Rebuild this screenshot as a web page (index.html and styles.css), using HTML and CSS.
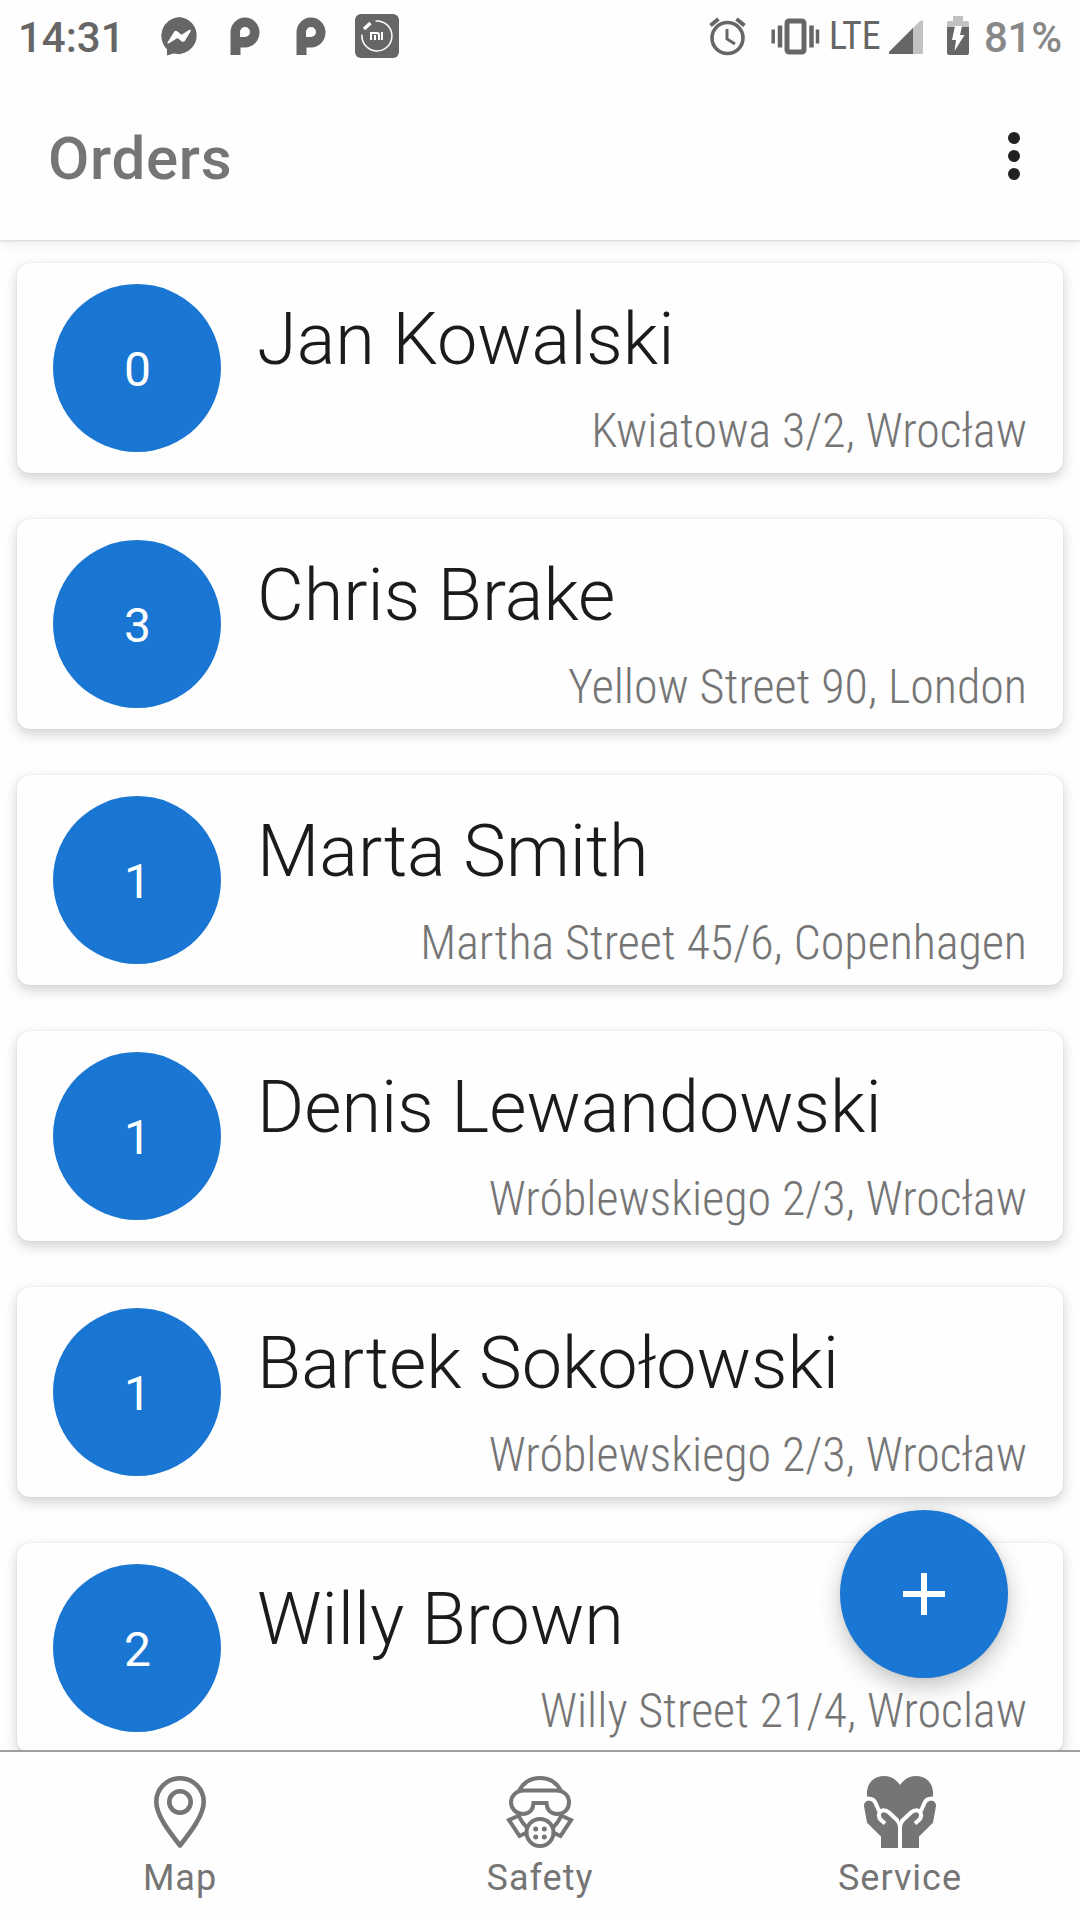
FILE: index.html
```html
<!DOCTYPE html>
<html lang="en">
<head>
<meta charset="utf-8">
<title>Orders</title>
<link rel="stylesheet" href="styles.css">
</head>
<body>
<div class="screen">
  <div class="status">
    <span class="clock">14:31</span>
    <svg class="notifications" width="250" height="72" viewBox="150 0 250 72">
      <path fill="#666" d="M179 17a19 18.500 0 1 1-5.500 36.500l-6.500 2v-6A19 19 0 0 1 179 17z"/>
      <path fill="#fff" d="M167.500 42.500l6.500-10.500q1.500-2 3.500-.5l4 3.300 7.500-4.800q3-1 1.500 1.500L185 40.700q-1.500 2-3.500.5l-4-3.200-8 5q-2.500 1-2-.5z"/>
      <path id="letter-mark" fill="#666" fill-rule="evenodd" d="M230.500 55V33a14.500 15 0 1 1 14.500 14.500h-4.500V55zM245 27a5 5 0 0 0-5 5v5h5a5 5 0 0 0 0-10z"/>
      <use href="#letter-mark" x="66"/>
      <rect x="355" y="14" width="44" height="44" rx="6" fill="#666"/>
      <path fill="none" stroke="#fff" stroke-width="1.500" d="M375.500 21a15 15 0 1 1-13.500 13.500"/>
      <path fill="none" stroke="#fff" stroke-width="3.500" d="M364 29l6.500-6"/>
      <path fill="none" stroke="#fff" stroke-width="2" d="M371 40v-7h6q2 0 2 2v5M375 35v5M382 32v8"/>
    </svg>
    <svg class="indicators" width="120" height="72" viewBox="705 0 120 72" fill="none" stroke="#666">
      <circle cx="727.500" cy="38" r="15.500" stroke-width="3.600"/>
      <path stroke-width="3" d="M727 29v10l8 5"/>
      <path stroke-width="4" d="M710.500 25.500l8-6.500M744.500 25.500l-8-6.500"/>
      <rect x="787" y="21" width="17" height="31" rx="2" stroke-width="5"/>
      <path stroke-width="4.500" d="M780 25.500v22M811.500 25.500v22"/>
      <path stroke-width="3.500" d="M773.200 29.500v14M817.500 29.500v14"/>
    </svg>
    <span class="network">LTE</span>
    <svg class="power" width="90" height="72" viewBox="885 0 90 72">
      <path fill="#c2c2c2" d="M889 54v-2l31-31q3-2 3 1v32z"/>
      <path fill="#666" d="M889 54v-2l24-24v26z"/>
      <path fill="#c2c2c2" d="M947 27v-4q0-2 2-2h4v-5h10v5h4q2 0 2 2v4z"/>
      <path fill="#666" d="M947 27h22v26q0 2-2 2h-18q-2 0-2-2z"/>
      <path fill="#fff" d="M955 26h7l-2 9h4.500L954.500 51l1.500-11h-4z"/>
    </svg>
    <span class="percent">81%</span>
  </div>
  <header class="appbar">
    <h1 class="title">Orders</h1>
    <div class="overflow"><i class="dot"></i><i class="dot"></i><i class="dot"></i></div>
  </header>
  <main class="list">
    <article class="card"><div class="count">0</div><div class="info"><div class="name">Jan Kowalski</div><div class="address">Kwiatowa 3/2, Wrocław</div></div></article>
    <article class="card"><div class="count">3</div><div class="info"><div class="name">Chris Brake</div><div class="address">Yellow Street 90, London</div></div></article>
    <article class="card"><div class="count">1</div><div class="info"><div class="name">Marta Smith</div><div class="address">Martha Street 45/6, Copenhagen</div></div></article>
    <article class="card"><div class="count">1</div><div class="info"><div class="name">Denis Lewandowski</div><div class="address">Wróblewskiego 2/3, Wrocław</div></div></article>
    <article class="card"><div class="count">1</div><div class="info"><div class="name">Bartek Sokołowski</div><div class="address">Wróblewskiego 2/3, Wrocław</div></div></article>
    <article class="card"><div class="count">2</div><div class="info"><div class="name">Willy Brown</div><div class="address">Willy Street 21/4, Wroclaw</div></div></article>
  </main>
  <nav class="tabs">
    <div class="tab">
      <svg width="72" height="72" viewBox="0 0 72 72" fill="none" stroke="#757575" stroke-width="4.600">
        <path stroke-linejoin="round" d="M36 69.500C27 58 12.300 40 12.300 26a23.700 23.700 0 0 1 47.400 0C59.700 40 45 58 36 69.500z"/>
        <circle cx="36" cy="26" r="10.700"/>
      </svg>
      <span class="label">Map</span>
    </div>
    <div class="tab">
      <svg width="72" height="72" viewBox="0 0 72 72" fill="none" stroke="#757575" stroke-width="4">
        <path d="M15 15C19 7 26 2 36 2s17 5 21 13"/>
        <path d="M20 14.500h32c8 0 13 5 13 12s-5 11.500-12 11.500c-6 0-10-4-10.500-11h-13C29 34 25 38 19 38S7 33 7 26.500s5-12 13-12z"/>
        <path d="M14 38c3 7 7 12 10 14M58 38c-3 7-7 12-10 14M14 40L5 44l10.500 16L24 56M58 40l9 4-10.500 16L48 56"/>
        <circle cx="36" cy="56.500" r="13.500"/>
        <g fill="#757575" stroke="none"><circle cx="31.700" cy="53" r="2.500"/><circle cx="40.300" cy="53" r="2.500"/><circle cx="31.700" cy="61" r="2.500"/><circle cx="40.300" cy="61" r="2.500"/></g>
      </svg>
      <span class="label">Safety</span>
    </div>
    <div class="tab">
      <svg width="72" height="72" viewBox="0 0 72 72">
        <g id="heart-hand">
          <path fill="#757575" d="M37 72H17V60.500L3 46.700 0 30c0-3 1.500-5 4-5.500L3 20C2 7 10 0 20 0c7 0 12 3.500 16 9h1z"/>
          <path fill="none" stroke="#fff" stroke-width="4" d="M1 22.500c9-.5 9.500 2 12.500 9 1.500 3.500 2 4.500 3.500 3.500 3-1.500 5-1 8 1.500l8 7.500c2.500 2.500 3 4 3 7v22M17 34c-3 4-3 7 0 10l4 3.500"/>
        </g>
        <use href="#heart-hand" transform="matrix(-1 0 0 1 72 0)"/>
      </svg>
      <span class="label">Service</span>
    </div>
  </nav>
  <div class="fab"><svg width="42" height="42" viewBox="0 0 42 42"><path d="M21 0v42M0 21h42" stroke="#fff" stroke-width="6"/></svg></div>
</div>
</body>
</html>
```
FILE: styles.css
```css
* { box-sizing: border-box; }
body { margin: 0; font-family: Roboto, "Liberation Sans", sans-serif; background: #fefefe; }
.screen { position: relative; display: flex; flex-direction: column; width: 1080px; height: 1920px; overflow: hidden; }
svg { display: block; flex: none; }

.status { position: relative; z-index: 2; display: flex; flex: none; height: 72px; padding-left: 18px; background: #fefefe; line-height: 75px; white-space: nowrap; }
.clock { width: 132px; font-size: 42px; font-weight: 500; color: #666; }
.indicators { margin-left: 305px; }
.network { width: 60px; padding-left: 4px; font-size: 38px; line-height: 72px; color: #666; font-stretch: 75%; }
.power { margin-right: 9px; }
.percent { font-size: 42px; font-weight: 500; color: #888; letter-spacing: -0.3px; }

.appbar { position: relative; z-index: 1; display: flex; flex: none; align-items: flex-start; justify-content: space-between; height: 168px; padding: 51px 60px 0 48px; background: #fefefe; box-shadow: 0 1px 2px rgba(0,0,0,.12), 0 3px 12px rgba(0,0,0,.08); }
.title { margin: 0; font-size: 60px; font-weight: 500; line-height: 72px; letter-spacing: 0.7px; color: #757575; }
.overflow { display: flex; flex-direction: column; gap: 6px; padding-top: 9px; }
.dot { width: 12px; height: 12px; border-radius: 50%; background: #212121; }

.list { display: flex; flex: 1; flex-direction: column; gap: 46px; min-height: 0; padding: 23px 17px 0; overflow: hidden; }
.card { display: flex; flex: none; height: 210px; padding: 21px 36px 0 36px; border-radius: 13px; background: #fefefe; box-shadow: 0 0 2px rgba(0,0,0,.1), 0 5px 13px rgba(0,0,0,.18); }
.count { flex: none; width: 168px; height: 168px; padding-left: 1px; border-radius: 50%; background: #1976d2; color: #fff; font-size: 48px; line-height: 172px; text-align: center; }
.info { display: flex; flex: 1; flex-direction: column; padding: 14px 0 0 36px; white-space: nowrap; }
.name { font-size: 72px; font-weight: 300; line-height: 84px; color: #1b1b1b; }
.address { margin-top: 21px; font-family: "Roboto Condensed", Roboto, sans-serif; font-size: 48px; font-weight: 300; font-stretch: 75%; line-height: 56px; text-align: right; color: #757575; }

.tabs { display: flex; flex: none; height: 170px; border-top: 2px solid #9e9e9e; background: #fefefe; }
.tab { display: flex; flex: 1; flex-direction: column; align-items: center; padding-top: 24px; }
.label { margin-top: 9px; font-size: 36px; line-height: 42px; letter-spacing: 1px; color: #757575; }

.fab { position: absolute; left: 840px; top: 1510px; display: flex; align-items: center; justify-content: center; width: 168px; height: 168px; border-radius: 50%; background: #1976d2; box-shadow: 0 9px 22px rgba(0,0,0,.22), 0 0 6px rgba(0,0,0,.06); }
```
